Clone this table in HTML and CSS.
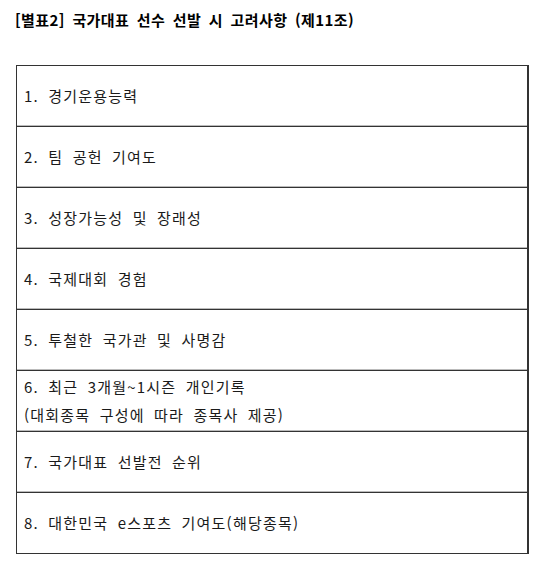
FILE: index.html
```html
<!DOCTYPE html>
<html lang="ko">
<head>
<meta charset="utf-8">
<link rel="stylesheet" href="styles.css">
</head>
<body>
<h1 class="title">[별표2] 국가대표 선수 선발 시 고려사항 (제11조)</h1>
<div class="table">
  <div class="row">1. 경기운용능력</div>
  <div class="row">2. 팀 공헌 기여도</div>
  <div class="row">3. 성장가능성 및 장래성</div>
  <div class="row">4. 국제대회 경험</div>
  <div class="row">5. 투철한 국가관 및 사명감</div>
  <div class="row two">6. 최근 3개월~1시즌 개인기록<br>(대회종목 구성에 따라 종목사 제공)</div>
  <div class="row">7. 국가대표 선발전 순위</div>
  <div class="row">8. 대한민국 e스포츠 기여도(해당종목)</div>
</div>
</body>
</html>
```
FILE: styles.css
```css
html, body {
  margin: 0;
  padding: 0;
  background: #fff;
}
body {
  font-family: "Noto Sans CJK KR", "Liberation Sans", sans-serif;
  color: #111;
  padding: 11px 0 0 15px;
}
.title {
  margin: 0;
  font-size: 15px;
  font-weight: bold;
  line-height: 18px;
  letter-spacing: 0.4px;
  word-spacing: 3px;
  color: #000;
}
.table {
  margin-top: 36px;
  margin-left: 1px;
  width: 510px;
  border: 1px solid #333;
  border-right-width: 2px;
  display: flex;
  flex-direction: column;
}
.row {
  height: 60px;
  display: flex;
  align-items: center;
  padding-left: 7px;
  font-size: 15px;
  letter-spacing: 1.2px;
  word-spacing: 4px;
  line-height: 28px;
  color: #1a1a1a;
  border-bottom: 1px solid #333;
  box-shadow: inset 0 -1px 0 #bbb;
}
.row:last-child {
  border-bottom: none;
  box-shadow: none;
}
```
